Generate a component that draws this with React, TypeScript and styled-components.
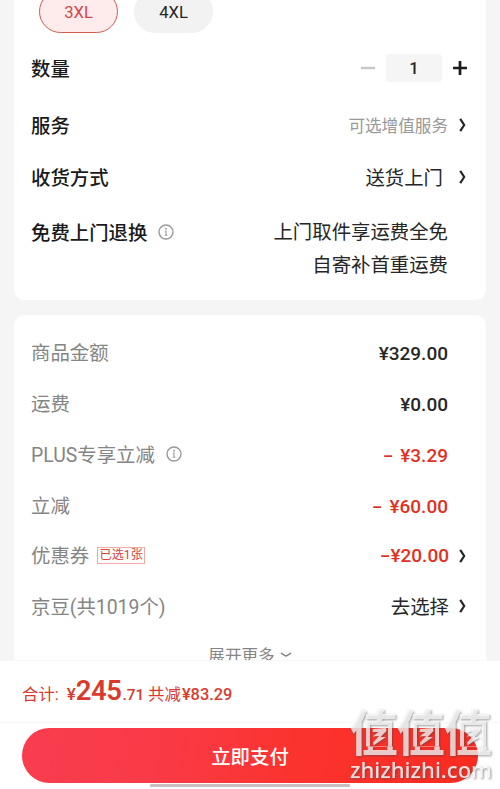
import React from 'react';
import styled, { createGlobalStyle } from 'styled-components';

const GlobalStyle = createGlobalStyle`
  * { box-sizing: border-box; }
  body {
    margin: 0;
    background: #f5f5f5;
    color: #262626;
    font-family: Roboto, "Noto Sans CJK SC", sans-serif;
    font-size: 19.4px;
  }
`;

const Page = styled.main`
  position: relative;
  display: flex;
  flex-direction: column;
  width: 500px;
  height: 789px;
  overflow: hidden;
`;

const Scroll = styled.div`
  display: flex;
  flex-direction: column;
  gap: 15px;
  height: 660px;
  padding: 0 14px;
  overflow: hidden;
`;

const Card = styled.section<{ $height: number; $first?: boolean }>`
  flex: none;
  height: ${p => p.$height}px;
  padding: ${p => (p.$first ? '0 17px' : '12px 17px 0')};
  border-radius: ${p => (p.$first ? '0 0 10px 10px' : '10px')};
  background: #fff;
  overflow: hidden;
`;

const Sizes = styled.div`
  display: flex;
  gap: 16px;
  height: 43px;
  margin: -10px 0 7px 8px;
`;

const SizePill = styled.div<{ $selected?: boolean }>`
  display: flex;
  align-items: center;
  justify-content: center;
  width: 79px;
  padding-top: 1px;
  border: 1px solid ${p => (p.$selected ? '#cf5b52' : '#f2f2f2')};
  border-radius: 22px;
  background: ${p => (p.$selected ? '#fdeceb' : '#f2f2f2')};
  color: ${p => (p.$selected ? '#d2464a' : '#262626')};
  font-size: 16.6px;
`;

const Row = styled.div<{ $height: number }>`
  display: flex;
  align-items: center;
  justify-content: space-between;
  height: ${p => p.$height}px;
`;

const Label = styled.div<{ $strong?: boolean }>`
  display: flex;
  align-items: center;
  padding-top: 3px;
  color: ${p => (p.$strong ? '#1a1a1a' : '#858585')};
  font-weight: ${p => (p.$strong ? 500 : 400)};
  line-height: 28px;
  white-space: nowrap;

  svg { margin: -4px 0 0 11px; }
`;

const Value = styled.div<{ $muted?: boolean; $gap?: number }>`
  display: flex;
  align-items: center;
  margin-right: 2px;
  color: ${p => (p.$muted ? '#999' : '#262626')};
  font-size: ${p => (p.$muted ? '16.6px' : '19.4px')};
  line-height: 28px;

  span { padding-top: 3px; }
  svg { margin-left: ${p => p.$gap ?? 10}px; }
`;

const Price = styled.div<{ $discount?: boolean; $arrow?: boolean }>`
  display: flex;
  align-items: center;
  margin-right: ${p => (p.$arrow ? '2px' : '21px')};
  padding-top: ${p => (p.$arrow ? '0' : '2px')};
  color: ${p => (p.$discount ? '#e1301f' : '#262626')};
  font-size: 19px;
  font-weight: 500;
  line-height: 28px;
  white-space: pre;

  svg { margin-left: 10px; }
`;

const Minus = styled.span<{ $tight?: boolean }>`
  display: inline-block;
  width: ${p => (p.$tight ? 10 : 13)}px;
  transform: scaleX(1.6);
  transform-origin: left center;
`;

const Stepper = styled.div`
  display: flex;
  align-items: center;
  margin: -1px 2px 0 0;
`;

const Quantity = styled.div`
  display: flex;
  align-items: center;
  justify-content: center;
  width: 56px;
  height: 28px;
  margin: 0 11px;
  border-radius: 4px;
  background: #f5f5f5;
  font-size: 16.5px;
  font-weight: 500;
`;

const Policy = styled.div`
  display: flex;
  align-items: flex-start;
  justify-content: space-between;
  padding-top: 15px;
  line-height: 33px;

  ${Label} { padding-top: 1px; line-height: 33px; }
`;

const PolicyLines = styled.div`
  margin-right: 21px;
  text-align: right;
`;

const Tag = styled.span`
  width: 48px;
  height: 17px;
  margin: -4px 0 0 8px;
  border: 1px solid #efaaa5;
  color: #d8433a;
  font-size: 12.2px;
  line-height: 14px;
  text-align: center;
`;

const More = styled.div`
  display: flex;
  justify-content: center;
  align-items: center;
  gap: 5px;
  height: 45px;
  color: #858585;
  font-size: 16.6px;
`;

const Footer = styled.footer`
  display: flex;
  flex-direction: column;
  align-items: center;
  height: 129px;
  border-top: 1px solid #f8f8f8;
  background: #fff;
`;

const Total = styled.div`
  display: flex;
  align-items: baseline;
  align-self: stretch;
  height: 62px;
  padding: 10px 22px 0;
  border-bottom: 1px solid #f8f8f8;
  color: #d93a2d;
  font-size: 16.4px;
  line-height: 40px;
  white-space: pre;
`;

const Amount = styled.span<{ $size: number; $gap?: number }>`
  margin-left: ${p => p.$gap ?? 0}px;
  font-size: ${p => p.$size}px;
  font-weight: 500;
`;

const Whole = styled.span`
  font-size: 27.5px;
  font-weight: 600;
  letter-spacing: -0.5px;
`;

const PayButton = styled.button`
  flex: none;
  width: 456px;
  height: 55px;
  margin-top: 5px;
  padding: 0;
  border: 0;
  border-radius: 28px;
  background: linear-gradient(100deg, #f93d4f 0%, #f93b48 28%, #fb332f 60%, #fa2b20 100%);
  color: #fff;
  font: 500 19.4px Roboto, "Noto Sans CJK SC", sans-serif;
`;

const HomeBar = styled.div`
  flex: none;
  width: 200px;
  height: 3px;
  margin-top: 1px;
  border-radius: 1px;
  background: #c9bfc0;
`;

const Watermark = styled.svg`
  position: absolute;
  left: 344px;
  top: 698px;
  overflow: visible;
  filter: drop-shadow(1px 1px 1px rgba(70, 70, 70, 0.7));
`;

const Chevron = () => (
  <svg width="8" height="16" viewBox="0 0 8 16" fill="none">
    <path d="M1.2 1.8C2.5 3.8 4 6 5.2 8C4 10 2.5 12.2 1.2 14.2" stroke="#262626" strokeWidth="2.2" />
  </svg>
);

const Info = () => (
  <svg width="16" height="16" viewBox="0 0 16 16" fill="none">
    <circle cx="8" cy="8" r="7" stroke="#999" strokeWidth="1.4" />
    <path d="M6.8 7H8v4.4M6.8 11.3h2.5" stroke="#999" strokeWidth="1.1" />
    <circle cx="8" cy="4.7" r=".9" fill="#999" />
  </svg>
);

const charges = [
  { label: '商品金额', amount: '¥329.00' },
  { label: '运费', amount: '¥0.00' },
  { label: 'PLUS专享立减', amount: ' ¥3.29', discount: true, info: true },
  { label: '立减', amount: ' ¥60.00', discount: true },
];

const marks = [6, 53, 100];

export default function App() {
  return (
    <Page>
      <GlobalStyle />
      <Scroll>
        <Card $height={300} $first>
          <Sizes>
            <SizePill $selected>3XL</SizePill>
            <SizePill>4XL</SizePill>
          </Sizes>
          <Row $height={57}>
            <Label $strong>数量</Label>
            <Stepper>
              <svg width="14" height="14" viewBox="0 0 14 14">
                <path d="M0 7h14" stroke="#c8c8c8" strokeWidth="2.4" />
              </svg>
              <Quantity>1</Quantity>
              <svg width="14" height="14" viewBox="0 0 14 14">
                <path d="M0 7h14M7 0v14" stroke="#1a1a1a" strokeWidth="2.7" />
              </svg>
            </Stepper>
          </Row>
          <Row $height={56}>
            <Label $strong>服务</Label>
            <Value $muted $gap={11}><span>可选增值服务</span><Chevron /></Value>
          </Row>
          <Row $height={48}>
            <Label $strong>收货方式</Label>
            <Value $gap={16}><span>送货上门</span><Chevron /></Value>
          </Row>
          <Policy>
            <Label $strong>免费上门退换<Info /></Label>
            <PolicyLines>上门取件享运费全免<br />自寄补首重运费</PolicyLines>
          </Policy>
        </Card>
        <Card $height={400}>
          {charges.map(c => (
            <Row key={c.label} $height={51}>
              <Label>{c.label}{c.info && <Info />}</Label>
              <Price $discount={c.discount}>{c.discount && <Minus>-</Minus>}{c.amount}</Price>
            </Row>
          ))}
          <Row $height={49}>
            <Label>优惠券<Tag>已选1张</Tag></Label>
            <Price $discount $arrow><Minus $tight>-</Minus>¥20.00<Chevron /></Price>
          </Row>
          <Row $height={52}>
            <Label>京豆(共1019个)</Label>
            <Value><span>去选择</span><Chevron /></Value>
          </Row>
          <More>
            展开更多
            <svg width="12" height="6" viewBox="0 0 12 6" fill="none">
              <path d="M1 1C3 2.3 4.5 3.3 6 4C7.5 3.3 9 2.3 11 1" stroke="#858585" strokeWidth="1.5" />
            </svg>
          </More>
        </Card>
      </Scroll>
      <Footer>
        <Total>
          合计: <Amount $size={17} $gap={4}>¥</Amount>
          <Whole>245</Whole>
          <Amount $size={15.4} $gap={1}>.71 </Amount>
          共减<Amount $size={16.4} $gap={1}>¥83.29</Amount>
        </Total>
        <PayButton>立即支付</PayButton>
        <HomeBar />
      </Footer>
      <Watermark width="156" height="91" viewBox="0 0 156 91" fill="#fff">
        <defs>
          <mask id="inner" maskUnits="userSpaceOnUse" x="0" y="0" width="156" height="91">
            <rect width="156" height="91" fill="#fff" />
            {marks.map(x => (
              <rect key={x} x={x + 14} y="23" width="31" height="25.5" fill="#000" />
            ))}
          </mask>
        </defs>
        <g fillOpacity=".74">
          <g mask="url(#inner)" fontFamily="Noto Sans CJK SC" fontWeight="700" fontSize="48.5">
            {marks.map(x => <text key={x} x={x - 0.5} y="53">值</text>)}
          </g>
          {marks.map(x => (
            <path
              key={x}
              transform={`translate(${x} 0)`}
              d="M16 23H42V48.5H38V27H20V48.5H16zM23 31L36 30L36.5 33L30.5 39H36L23.5 47.5L23 44.5L29 38L22.5 38.5L28.5 34H22.5z"
            />
          ))}
        </g>
        <text x="6" y="80" fontFamily="Noto Sans" fontWeight="500" fontSize="21" textLength="142" lengthAdjust="spacingAndGlyphs" fillOpacity=".84">zhizhizhi.com</text>
      </Watermark>
    </Page>
  );
}
